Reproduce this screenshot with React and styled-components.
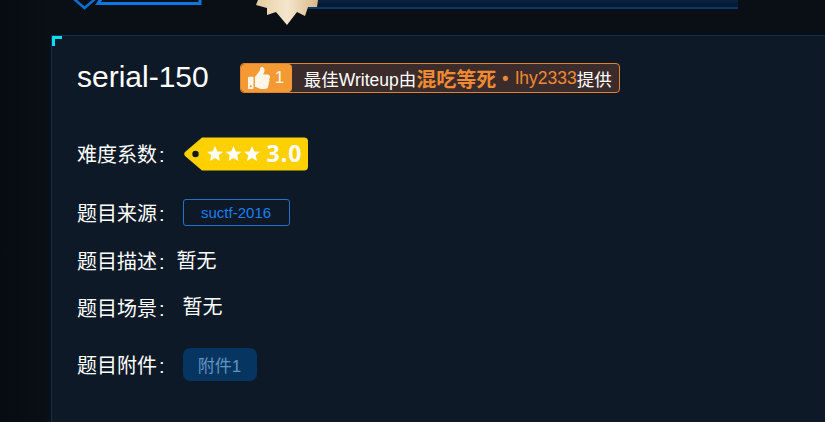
import React from 'react';
import styled, { createGlobalStyle } from 'styled-components';
import { FaThumbsUp } from 'react-icons/fa';

const FONT = '"Liberation Sans", "Noto Sans CJK SC", sans-serif';

const Global = createGlobalStyle`
    html, body {
        margin: 0;
        padding: 0;
        width: 825px;
        height: 422px;
        overflow: hidden;
        background: linear-gradient(90deg, #070c12 0, #0a0f16 50px, #0a0f16 100%);
        font-family: ${FONT};
        color: #fff;
    }
`;

const Page = styled.div`
    width: 825px;
    height: 422px;
    overflow: hidden;
`;

const HeaderArt = styled.svg`
    display: block;
    width: 825px;
    height: 35px;
`;

const Panel = styled.section`
    position: relative;
    box-sizing: border-box;
    margin-left: 51px;
    height: 387px;
    padding: 24px 0 0 25px;
    background: #0d1927;
    border-top: 1px solid #12304d;
    border-left: 1px solid #12304d;
`;

const Corner = styled.i`
    position: absolute;
    left: 0;
    top: 0;
    width: 7px;
    height: 7px;
    border-top: 3px solid #00e1f5;
    border-left: 3px solid #00e1f5;
`;

const Row = styled.div`
    display: flex;
    align-items: center;
    height: ${p => p.$height}px;
    margin-top: ${p => p.$top || 0}px;
`;

const Title = styled.h1`
    margin: 0 31px 0 0;
    font-size: 30px;
    font-weight: 400;
    line-height: 34px;
`;

const Banner = styled.div`
    display: flex;
    align-items: center;
    box-sizing: border-box;
    width: 380px;
    height: 30px;
    margin-top: 2px;
    background: #3b2b2a;
    border: 1px solid #e5822f;
    border-radius: 4px;
    font-size: 17.5px;
    white-space: nowrap;
`;

const Likes = styled.div`
    display: flex;
    align-items: center;
    gap: 5px;
    width: 51px;
    height: 28px;
    box-sizing: border-box;
    padding-left: 7px;
    margin-right: 12px;
    background: #f39a35;
    border-radius: 4px;
    font-size: 17px;
    color: #fff6ea;
`;

const Hot = styled.span`
    color: #f08a33;
    font-weight: ${p => (p.$bold ? 700 : 400)};
    font-size: ${p => p.$size || 17.5}px;
    margin-left: ${p => p.$gap || 0}px;
`;

const Label = styled.span`
    padding-top: 2px;
    font-size: 20px;
    line-height: 28px;
    margin-right: ${p => p.$gap}px;
    white-space: nowrap;
`;

const Colon = styled.span`
    margin-left: 2px;
`;

const Plain = styled.span`
    font-size: 20px;
    line-height: 28px;
    margin-top: ${p => p.$lift || 0}px;
`;

const Rating = styled.div`
    position: relative;
    display: flex;
    align-items: center;
    width: 124px;
    height: 34px;
`;

const TagShape = styled.svg`
    position: absolute;
    left: 0;
    top: 0;
`;

const Score = styled.span`
    position: absolute;
    left: 83px;
    top: 0;
    font-family: "Open Sans", sans-serif;
    font-size: 23px;
    font-weight: 700;
    line-height: 33px;
    letter-spacing: 1px;
`;

const SourceTag = styled.span`
    box-sizing: border-box;
    width: 107px;
    height: 27px;
    border: 1px solid #2272c8;
    border-radius: 3px;
    color: #1a7fef;
    font-size: 15px;
    line-height: 25px;
    text-align: center;
`;

const Attachment = styled.button`
    width: 74px;
    height: 33px;
    padding: 0;
    border: 0;
    border-radius: 7px;
    background: #053560;
    color: #6394c0;
    font-family: ${FONT};
    font-size: 17px;
`;

const STAR = 'M0 -8 L2.4 -2.6 L8 -2.3 L3.700 1.300 L5 7 L0 3.900 L-5 7 L-3.700 1.300 L-8 -2.300 L-2.400 -2.600 Z';

const Art = () => (
    <HeaderArt viewBox="0 0 825 35">
        <defs>
            <linearGradient id="gold" x1="0" y1="0" x2="1" y2="0">
                <stop offset="0" stopColor="#e6cda0" />
                <stop offset="0.5" stopColor="#f4e6cc" />
                <stop offset="1" stopColor="#d9b888" />
            </linearGradient>
        </defs>
        <path d="M74 -1 L84.500 8 L95 -1" fill="none" stroke="#0b6fd6" strokeWidth="2.500" />
        <path d="M103 -4 L98 3.500 L200 3.500 L200 -4" fill="none" stroke="#0b78e2" strokeWidth="3" />
        <rect x="306" y="0" width="432" height="3" fill="#04233f" />
        <rect x="306" y="3" width="432" height="4" fill="#071a30" />
        <rect x="306" y="7" width="432" height="2" fill="#063a70" />
        <path
            d="M258 0 L256 5 L267 8 L267 15 L276 12 L287 25 L297 12 L305 16 L308 7 L317 7 L318 0 Z"
            fill="url(#gold)"
        />
    </HeaderArt>
);

const App = () => (
    <Page>
        <Global />
        <Art />
        <Panel>
            <Corner />
            <Row $height={34}>
                <Title>serial-150</Title>
                <Banner>
                    <Likes>
                        <FaThumbsUp size={22} color="#fff6ea" />
                        1
                    </Likes>
                    最佳Writeup由<Hot $bold $size={20}>混吃等死</Hot>
                    <Hot $bold $gap={6}>•</Hot>
                    <Hot $gap={7}>lhy2333</Hot>提供
                </Banner>
            </Row>
            <Row $height={34} $top={43}>
                <Label $gap={19}>难度系数<Colon>:</Colon></Label>
                <Rating>
                    <TagShape width="124" height="34" viewBox="0 0 124 34">
                        <path
                            d="M18 0.500 L120 0.500 Q124 0.500 124 4.500 L124 29.500 Q124 33.500 120 33.500 L18 33.500 L1 19 Q-0.500 17 1 15 Z"
                            fill="#ffd000"
                        />
                        <circle cx="11.500" cy="17" r="3.200" fill="#14161a" />
                        <path d={STAR} transform="translate(31 17)" fill="#fff" />
                        <path d={STAR} transform="translate(49.500 17)" fill="#fff" />
                        <path d={STAR} transform="translate(68 17)" fill="#fff" />
                    </TagShape>
                    <Score>3.0</Score>
                </Rating>
            </Row>
            <Row $height={27} $top={28}>
                <Label $gap={18}>题目来源<Colon>:</Colon></Label>
                <SourceTag>suctf-2016</SourceTag>
            </Row>
            <Row $height={28} $top={21}>
                <Label $gap={12}>题目描述<Colon>:</Colon></Label>
                <Plain>暂无</Plain>
            </Row>
            <Row $height={28} $top={19}>
                <Label $gap={18}>题目场景<Colon>:</Colon></Label>
                <Plain $lift={-3}>暂无</Plain>
            </Row>
            <Row $height={33} $top={26}>
                <Label $gap={18}>题目附件<Colon>:</Colon></Label>
                <Attachment>附件1</Attachment>
            </Row>
        </Panel>
    </Page>
);

export default App;
